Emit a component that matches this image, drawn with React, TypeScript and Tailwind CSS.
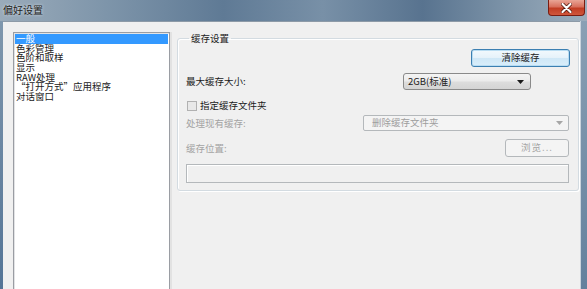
const cjk = { fontFamily: '"Noto Sans CJK SC", "Noto Sans", sans-serif' };

const items = ['一般', '色彩管理', '色阶和取样', '显示', 'RAW处理', '“打开方式”应用程序', '对话窗口'];

function Arrow({ disabled }: { disabled?: boolean }) {
    return (
        <svg width="7" height="4" viewBox="0 0 7 4">
            <path d="M0 0 L7 0 L3.5 4 Z" fill={disabled ? '#a6a6a6' : '#1a1a1a'} />
        </svg>
    );
}

export default function App() {
    return (
        <div className="w-[587px] h-[289px] overflow-hidden flex flex-col bg-[#6f8aa4] text-[9.5px] text-[#1b1b1b]" style={cjk}>
            {/* Title bar */}
            <div className="h-[21px] shrink-0 flex items-start justify-between bg-[linear-gradient(90deg,#9aabba_0%,#7e95aa_18%,#5f7a95_38%,#7890a7_55%,#58738f_72%,#8197ab_88%,#9bacbb_100%)]">
                <span className="ml-[3px] mt-[4px] text-[10px] leading-[12px] text-[#222] [text-shadow:0_0_3px_#e8eef3]">偏好设置</span>
                <div className="mr-[2px] w-[37px] h-[16px] rounded-b-[4px] border border-t-0 border-[#7a1d12] bg-[linear-gradient(180deg,#e9a596_0%,#d8705d_45%,#c13d24_55%,#d0573c_100%)] flex items-center justify-center">
                    <svg width="11" height="10" viewBox="0 0 11 10">
                        <path d="M1.5 1 L9.5 9 M9.5 1 L1.5 9" stroke="#4a1208" strokeWidth="3.6" strokeLinecap="round" />
                        <path d="M1.5 1 L9.5 9 M9.5 1 L1.5 9" stroke="#ffffff" strokeWidth="2.2" strokeLinecap="round" />
                    </svg>
                </div>
            </div>

            {/* Body */}
            <div className="flex-1 flex">
                <div className="w-[3px] bg-[linear-gradient(180deg,#7f97ad,#4d6f93)]" />
                <div className="flex-1 bg-[#f0f0f0] border-t border-[#8d9aa7] flex items-start pl-[10px] pt-[10px]">
                    {/* Category list */}
                    <div className="w-[157px] h-[300px] bg-white border border-[#9a9da3] shadow-[inset_1px_1px_0_#e2e3e5] pt-[1px] px-[1px]">
                        {items.map((item, i) => (
                            <div
                                key={item}
                                className={`h-[9.7px] leading-[9.7px] pl-[1px] whitespace-nowrap ${i === 0 ? 'bg-[#3399ff] text-white' : 'text-[#1b1b1b]'}`}
                            >
                                {item}
                            </div>
                        ))}
                    </div>
                    <div className="w-[2px] h-[300px] bg-[#e2e2e2]" />

                    {/* Cache settings group */}
                    <fieldset className="ml-[5px] w-[402px] h-[159px] border border-[#d3dbe1] rounded-[3px] shadow-[inset_1px_1px_0_#ffffff,1px_1px_0_#ffffff] pl-[8px] pr-[8px] flex flex-col">
                        <legend className="ml-[3px] px-[2px] leading-[12px] text-[#1b1b1b]">缓存设置</legend>

                        <div className="mt-[5px] flex justify-end">
                            <button className="w-[99px] h-[18px] rounded-[3px] border border-[#3c7fb1] bg-[linear-gradient(180deg,#f2f9fd_0%,#e6f2fa_48%,#cfe7f6_52%,#d9eefb_100%)] shadow-[inset_0_0_0_1px_#b8dcf2] text-[#1b1b1b] leading-none">
                                清除缓存
                            </button>
                        </div>

                        <div className="mt-[6px] flex items-center justify-between">
                            <span>最大缓存大小:</span>
                            <div className="mr-[39px] w-[128px] h-[17px] rounded-[3px] border border-[#8a8a8a] bg-[linear-gradient(180deg,#f4f4f4_0%,#ebebeb_48%,#dddddd_52%,#d4d4d4_100%)] flex items-center justify-between pl-[4px] pr-[6px]">
                                <span className="leading-none">2GB(标准)</span>
                                <Arrow />
                            </div>
                        </div>

                        <div className="mt-[11px] flex items-center gap-[3px] h-[10px]">
                            <div className="ml-[1px] w-[10px] h-[10px] border border-[#b1b1b1] bg-[#e8e8e8]" />
                            <span className="leading-none">指定缓存文件夹</span>
                        </div>

                        <div className="mt-[4px] flex items-center justify-between text-[#a3a3a3]">
                            <span>处理现有缓存:</span>
                            <div className="mr-[1px] w-[206px] h-[16px] rounded-[2px] border border-[#b4b8bb] bg-[#f4f4f4] flex items-center justify-between pl-[8px] pr-[5px]">
                                <span className="leading-none text-[#9e9e9e]">删除缓存文件夹</span>
                                <Arrow disabled />
                            </div>
                        </div>

                        <div className="mt-[8px] flex items-center justify-between text-[#a3a3a3]">
                            <span>缓存位置:</span>
                            <button className="mr-[1px] w-[64px] h-[18px] rounded-[3px] border border-[#b4b8bb] bg-[#f4f4f4] text-[#a3a3a3] leading-none tracking-[1px]">
                                浏览...
                            </button>
                        </div>

                        <div className="mt-[7px] mr-[1px] h-[19px] border border-[#b4b8bb] bg-[#f0f0f0] shadow-[inset_1px_1px_0_#ffffff]" />
                    </fieldset>
                </div>
                <div className="w-[7px] bg-[linear-gradient(180deg,#8aa0b4,#5d7b99)] border-l border-[#c9d3dc]" />
            </div>
        </div>
    );
}
